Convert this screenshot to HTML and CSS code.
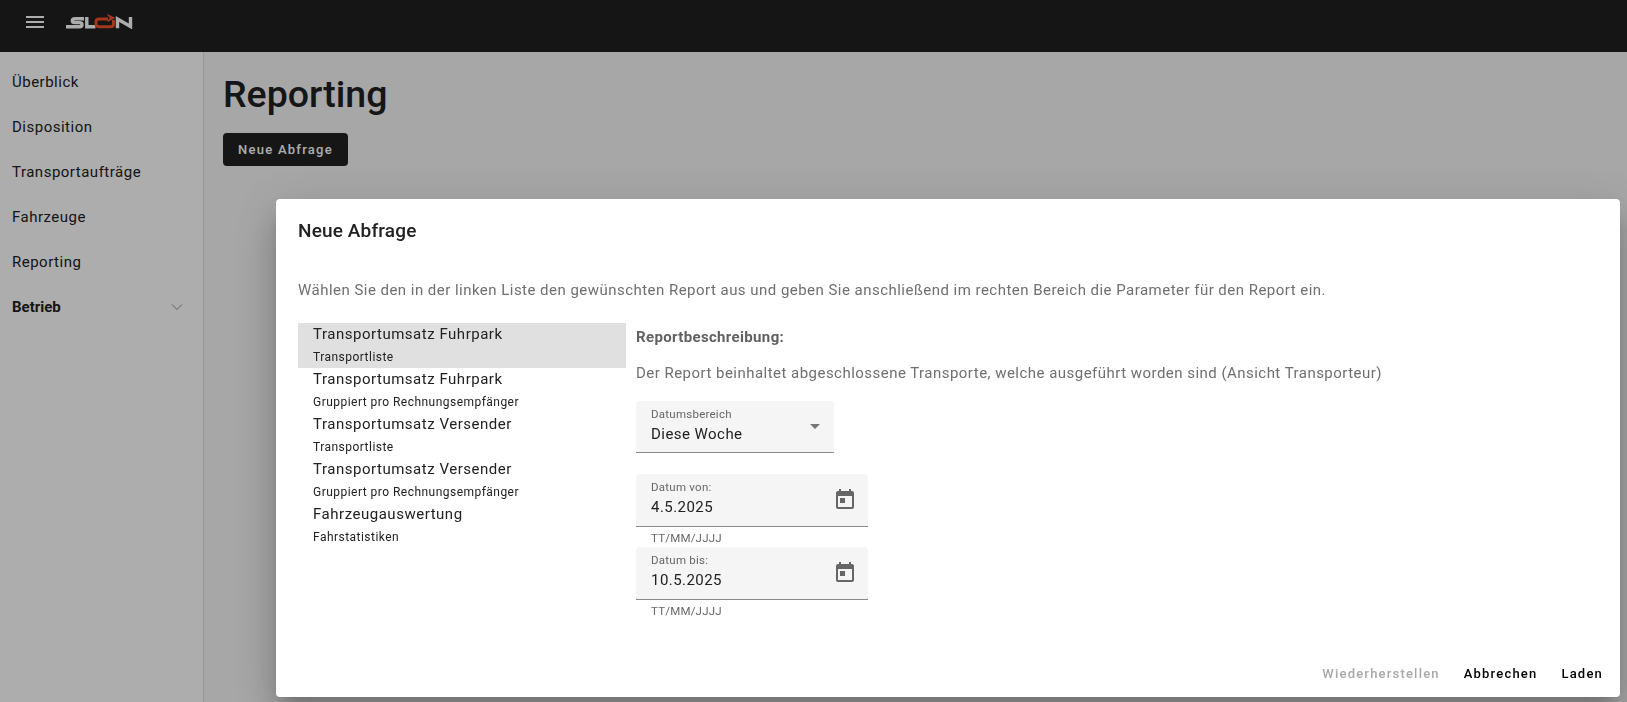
FILE: index.html
```html
<!DOCTYPE html>
<html lang="de">
<head>
<meta charset="utf-8">
<title>Reporting</title>
<link rel="stylesheet" href="styles.css">
</head>
<body>
<div class="app">
  <header class="topbar">
    <svg class="menu-icon" width="24" height="24" viewBox="0 0 24 24"><path d="M3 18h18v-2H3v2zm0-5h18v-2H3v2zm0-7v2h18V6H3z"/></svg>
    <svg class="logo" width="68" height="15" viewBox="0 0 68 15">
      <path class="lw" d="M18 4.700 H9 Q6.300 4.700 6.300 6.700 Q6.300 8.600 9 8.600 H13.500 Q16 8.600 16 10.500 Q16 12.800 13.500 12.800 H0"/>
      <path class="lw" d="M20.800 3 V12.800 H29.500"/>
      <path class="lr" d="M42 5 H33.500 Q30 5 30 7.500 V10.300 Q30 12.800 33.500 12.800 H44.500 Q47.500 12.800 47.500 10.300 V6"/>
      <path class="lrf" d="M41.500 1.500 V0 L49.500 4 L41.500 8 V6.200 L43.500 5 V3.500 Z"/>
      <path class="lw" d="M51.500 14.300 V5 L64.500 12.500 V3"/>
    </svg>
  </header>
  <div class="body">
    <nav class="sidebar">
      <a class="nav-item">Überblick</a>
      <a class="nav-item">Disposition</a>
      <a class="nav-item">Transportaufträge</a>
      <a class="nav-item">Fahrzeuge</a>
      <a class="nav-item">Reporting</a>
      <a class="nav-item nav-group">Betrieb
        <svg class="chev" width="12" height="8" viewBox="0 0 12 8"><path d="M1 1.500 L6 6.500 L11 1.500"/></svg>
      </a>
    </nav>
    <main class="content">
      <h1 class="page-title">Reporting</h1>
      <button class="primary-btn">Neue Abfrage</button>
    </main>
  </div>
</div>
<div class="scrim"></div>
<section class="dialog">
  <h2 class="dialog-title">Neue Abfrage</h2>
  <p class="dialog-intro">Wählen Sie den in der linken Liste den gewünschten Report aus und geben Sie anschließend im rechten Bereich die Parameter für den Report ein.</p>
  <div class="dialog-main">
    <ul class="report-list">
      <li class="report selected"><span class="r-title">Transportumsatz Fuhrpark</span><span class="r-sub">Transportliste</span></li>
      <li class="report"><span class="r-title">Transportumsatz Fuhrpark</span><span class="r-sub">Gruppiert pro Rechnungsempfänger</span></li>
      <li class="report"><span class="r-title">Transportumsatz Versender</span><span class="r-sub">Transportliste</span></li>
      <li class="report"><span class="r-title">Transportumsatz Versender</span><span class="r-sub">Gruppiert pro Rechnungsempfänger</span></li>
      <li class="report"><span class="r-title">Fahrzeugauswertung</span><span class="r-sub">Fahrstatistiken</span></li>
    </ul>
    <div class="params">
      <div class="desc-head">Reportbeschreibung:</div>
      <p class="desc">Der Report beinhaltet abgeschlossene Transporte, welche ausgeführt worden sind (Ansicht Transporteur)</p>
      <div class="field select-field">
        <div class="field-text"><span class="f-label">Datumsbereich</span><span class="f-value">Diese Woche</span></div>
        <span class="caret"></span>
      </div>
      <div class="field date-field">
        <div class="field-text"><span class="f-label">Datum von:</span><span class="f-value">4.5.2025</span></div>
        <svg class="cal" width="24" height="24" viewBox="0 0 24 24"><path d="M19 3h-1V1h-2v2H8V1H6v2H5c-1.110 0-1.990.900-1.990 2L3 19c0 1.100.890 2 2 2h14c1.100 0 2-.900 2-2V5c0-1.100-.900-2-2-2zm0 16H5V8h14v11zM7 10h5v5H7z"/></svg>
      </div>
      <div class="hint">TT/MM/JJJJ</div>
      <div class="field date-field">
        <div class="field-text"><span class="f-label">Datum bis:</span><span class="f-value">10.5.2025</span></div>
        <svg class="cal" width="24" height="24" viewBox="0 0 24 24"><path d="M19 3h-1V1h-2v2H8V1H6v2H5c-1.110 0-1.990.900-1.990 2L3 19c0 1.100.890 2 2 2h14c1.100 0 2-.900 2-2V5c0-1.100-.900-2-2-2zm0 16H5V8h14v11zM7 10h5v5H7z"/></svg>
      </div>
      <div class="hint">TT/MM/JJJJ</div>
    </div>
  </div>
  <div class="actions">
    <button class="text-btn disabled">Wiederherstellen</button>
    <button class="text-btn">Abbrechen</button>
    <button class="text-btn">Laden</button>
  </div>
</section>
</body>
</html>
```

FILE: styles.css
```css
* { box-sizing: border-box; }
html, body { margin: 0; height: 100%; overflow: hidden; }
body { font-family: Roboto, sans-serif; color: #212121; background: #fff; }
.app { height: 702px; display: flex; flex-direction: column; }
.topbar { height: 52px; background: #202020; display: flex; align-items: flex-start; padding: 10px 0 0 23px; flex: none; }
.menu-icon { fill: #fff; width: 24px; height: 24px; }
.logo { margin: 4px 0 0 19px; }
.lw { fill: none; stroke: #fff; stroke-width: 3.400; }
.lr { fill: none; stroke: #f0502c; stroke-width: 3; }
.lrf { fill: #f0502c; }
.body { flex: 1; display: flex; min-height: 0; background: #fafafa; }
.sidebar { width: 204px; flex: none; background: #fff; border-right: 1px solid #e0e0e0; padding-top: 7px; }
.nav-item { display: flex; align-items: center; justify-content: space-between; height: 45px; padding: 0 20px 0 12px; font-size: 15px; letter-spacing: .5px; color: #212121; }
.nav-group { font-weight: 700; letter-spacing: 0; }
.chev { fill: none; stroke: #8a8a8a; stroke-width: 1; }
.content { flex: 1; padding: 0 0 0 19px; background: #f7f7f7; }
.page-title { font-size: 37.500px; font-weight: 500; line-height: 44px; margin: 20px 0 0; color: #212121; }
.primary-btn { display: block; margin: 17px 0 0; width: 125px; height: 33px; border: 0; border-radius: 4px; background: #212121; color: #fff; font: 500 13px Roboto, sans-serif; letter-spacing: 1.250px; }
.scrim { position: fixed; inset: 0; background: rgba(0,0,0,.32); }
.dialog { position: fixed; left: 276px; top: 199px; width: 1344px; height: 498px; background: #fff; border-radius: 4px; box-shadow: 0 11px 15px -7px rgba(0,0,0,.2), 0 24px 38px 3px rgba(0,0,0,.14), 0 9px 46px 8px rgba(0,0,0,.12); padding: 0 22px; display: flex; flex-direction: column; }
.dialog-title { margin: 20px 0 0; font-size: 19px; line-height: 24px; font-weight: 500; color: #212121; letter-spacing: .15px; }
.dialog-intro { margin: 37px 0 0; font-size: 15px; line-height: 20px; letter-spacing: .47px; color: #6f6f6f; }
.dialog-main { display: flex; margin-top: 23px; flex: 1; }
.report-list { list-style: none; margin: 0; padding: 0; width: 328px; flex: none; }
.report { height: 45px; padding: 0 0 0 15px; display: flex; flex-direction: column; }
.report.selected { background: #e0e0e0; }
.r-title { font-size: 15px; line-height: 22px; letter-spacing: .52px; color: #212121; }
.r-sub { font-size: 12px; line-height: 22px; margin-top: 1px; letter-spacing: .47px; color: #212121; }
.params { margin-left: 10px; flex: 1; display: flex; flex-direction: column; align-items: flex-start; }
.desc-head { font-size: 15px; font-weight: 700; line-height: 20px; margin-top: 4px; letter-spacing: .35px; color: #616161; }
.desc { margin: 16px 0 0; font-size: 15px; line-height: 20px; letter-spacing: .47px; color: #6f6f6f; }
.field { display: flex; justify-content: space-between; align-items: center; background: #f5f5f5; border-radius: 4px 4px 0 0; border-bottom: 1px solid #8a8a8a; padding: 0 15px; }
.select-field { width: 198px; height: 52px; margin-top: 18px; }
.date-field { width: 232px; height: 53px; padding-right: 11px; }
.select-field + .date-field { margin-top: 21px; }
.field-text { display: flex; flex-direction: column; margin-top: -3px; }
.f-label { font-size: 11.500px; line-height: 14px; letter-spacing: .25px; color: #666; }
.f-value { font-size: 15px; line-height: 20px; letter-spacing: .45px; margin-top: 3px; color: #212121; }
.caret { width: 0; height: 0; border-left: 5px solid transparent; border-right: 5px solid transparent; border-top: 5px solid #757575; margin-right: -1px; }
.cal { fill: #666; }
.hint { font-size: 11.500px; line-height: 22px; letter-spacing: .2px; color: #666; padding-left: 15px; height: 20px; }
.actions { display: flex; justify-content: flex-end; gap: 24px; height: 34px; padding: 0; margin-right: -5px; }
.text-btn { border: 0; background: none; padding: 0; height: 20px; font: 500 13px Roboto, sans-serif; letter-spacing: 1.200px; color: #000; }
.text-btn.disabled { color: #a8a8a8; }
```
